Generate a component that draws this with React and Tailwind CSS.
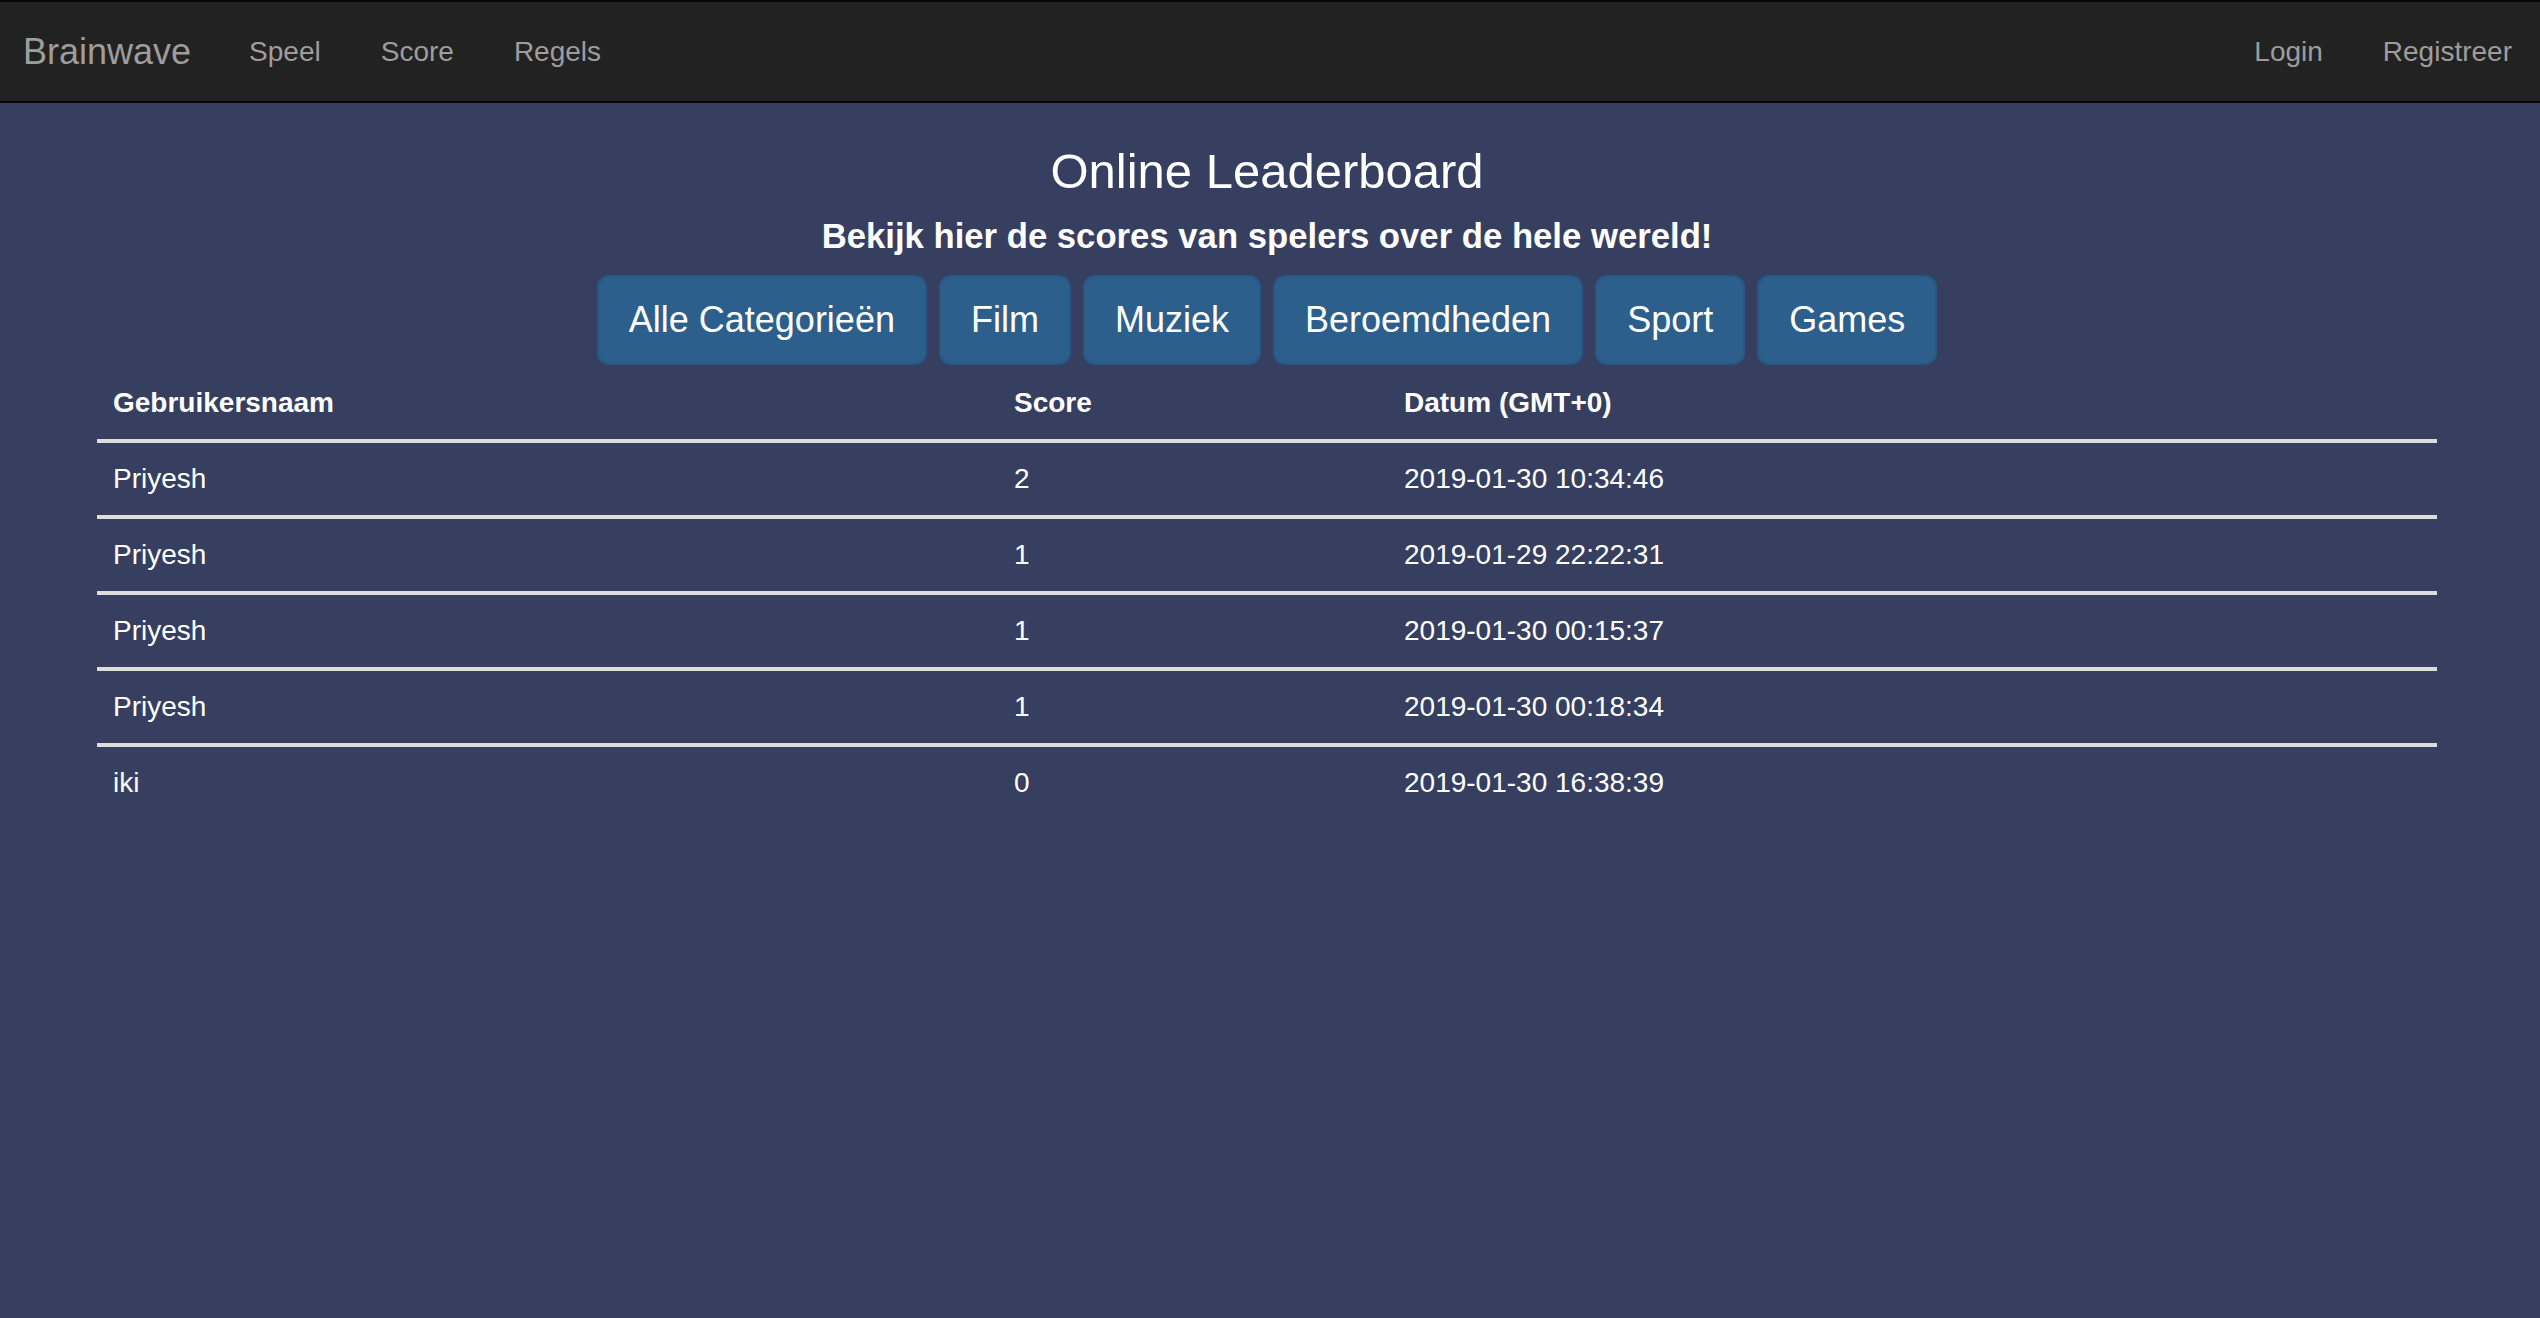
import React from "react";

const rows = [
  ["Priyesh", "2", "2019-01-30 10:34:46"],
  ["Priyesh", "1", "2019-01-29 22:22:31"],
  ["Priyesh", "1", "2019-01-30 00:15:37"],
  ["Priyesh", "1", "2019-01-30 00:18:34"],
  ["iki", "0", "2019-01-30 16:38:39"],
];

const cats = ["Alle Categorieën", "Film", "Muziek", "Beroemdheden", "Sport", "Games"];

export default function App() {
  return (
    <div
      className="min-h-[1318px] w-full bg-[#363f5f] text-white"
      style={{ fontFamily: '"Liberation Sans", Arial, Helvetica, sans-serif' }}
    >
      <nav className="flex h-[103px] items-center justify-between border-t-2 border-b-2 border-[#080808] bg-[#222222] text-[#9d9d9d]">
        <div className="flex items-center">
          <span className="pl-[23px] pr-[28px] text-[36px] leading-[40px]">Brainwave</span>
          <a className="px-[30px] text-[28px] leading-[40px]">Speel</a>
          <a className="px-[30px] text-[28px] leading-[40px]">Score</a>
          <a className="px-[30px] text-[28px] leading-[40px]">Regels</a>
        </div>
        <div className="flex items-center">
          <a className="px-[30px] text-[28px] leading-[40px]">Login</a>
          <a className="pl-[30px] pr-[28px] text-[28px] leading-[40px]">Registreer</a>
        </div>
      </nav>

      <div className="ml-[97px] w-[2340px]">
        <h3 className="mt-[42px] text-center text-[49px] font-medium leading-[53px]">Online Leaderboard</h3>
        <h4 className="mt-[18px] text-center text-[34.7px] font-bold leading-[40px]">
          Bekijk hier de scores van spelers over de hele wereld!
        </h4>
        <div className="mt-[19px] flex justify-center gap-[12px]">
          {cats.map((c) => (
            <button
              key={c}
              className="flex h-[90px] items-center rounded-[12px] border-2 border-[#2a5683] bg-[#2d5f8d] px-[30px] text-[36px] leading-[46px] text-white"
            >
              {c}
            </button>
          ))}
        </div>

        <table className="mt-[2px] w-full border-collapse text-[28px] leading-[40px]">
          <thead>
            <tr className="border-b-4 border-[#dddddd]">
              <th className="w-[901px] p-[16px] text-left font-bold">Gebruikersnaam</th>
              <th className="w-[390px] p-[16px] text-left font-bold">Score</th>
              <th className="p-[16px] text-left font-bold">Datum (GMT+0)</th>
            </tr>
          </thead>
          <tbody>
            {rows.map((r, i) => (
              <tr key={i} className={i === 0 ? "" : "border-t-4 border-[#dddddd]"}>
                <td className="p-[16px]">{r[0]}</td>
                <td className="p-[16px]">{r[1]}</td>
                <td className="p-[16px]">{r[2]}</td>
              </tr>
            ))}
          </tbody>
        </table>
      </div>
    </div>
  );
}
